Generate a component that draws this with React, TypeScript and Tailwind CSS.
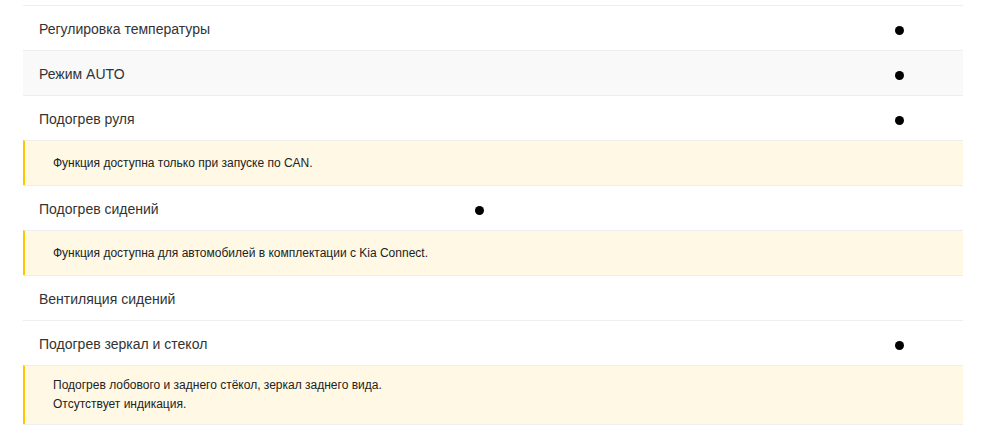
import React from 'react';

type Row =
  | { kind: 'item'; label: string; dot?: 'end' | 'mid'; shaded?: boolean }
  | { kind: 'note'; lines: string[] };

const rows: Row[] = [
  { kind: 'item', label: 'Регулировка температуры', dot: 'end' },
  { kind: 'item', label: 'Режим AUTO', dot: 'end', shaded: true },
  { kind: 'item', label: 'Подогрев руля', dot: 'end' },
  { kind: 'note', lines: ['Функция доступна только при запуске по CAN.'] },
  { kind: 'item', label: 'Подогрев сидений', dot: 'mid' },
  { kind: 'note', lines: ['Функция доступна для автомобилей в комплектации с Kia Connect.'] },
  { kind: 'item', label: 'Вентиляция сидений' },
  { kind: 'item', label: 'Подогрев зеркал и стекол', dot: 'end' },
  {
    kind: 'note',
    lines: ['Подогрев лобового и заднего стёкол, зеркал заднего вида.', 'Отсутствует индикация.'],
  },
];

function Dot() {
  return <span className="block w-[9px] h-[9px] rounded-full bg-black" />;
}

export default function App() {
  return (
    <div
      className="w-[984px] h-[436px] bg-white pt-[5px] px-[21px] overflow-hidden"
      style={{ fontFamily: '"Liberation Sans", Arial, sans-serif' }}
    >
      <div className="w-[940px] ml-[2px] border-b border-[#eeeeee]">
        {rows.map((row, i) =>
          row.kind === 'item' ? (
            <div
              key={i}
              className={
                'h-[45px] pt-[2px] border-t border-[#eeeeee] flex items-center text-[14px] text-[#333333] ' +
                (row.shaded ? 'bg-[#f9f9f9]' : 'bg-white')
              }
            >
              <span className="pl-4 w-[452px] shrink-0">{row.label}</span>
              {row.dot === 'mid' && (
                <span className="pt-[2px]">
                  <Dot />
                </span>
              )}
              {row.dot === 'end' && (
                <span className="ml-auto mr-[59px] pt-[2px]">
                  <Dot />
                </span>
              )}
            </div>
          ) : (
            <div
              key={i}
              className={
                'border-t border-[#eeeeee] bg-[#fff8e5] border-l-2 border-l-[#fdc700] pl-[28px] flex flex-col justify-center text-[12px] leading-[19px] text-[#222222] ' +
                (row.lines.length > 1 ? 'h-[59px]' : 'h-[45px]')
              }
            >
              {row.lines.map((l) => (
                <span key={l}>{l}</span>
              ))}
            </div>
          )
        )}
      </div>
    </div>
  );
}
